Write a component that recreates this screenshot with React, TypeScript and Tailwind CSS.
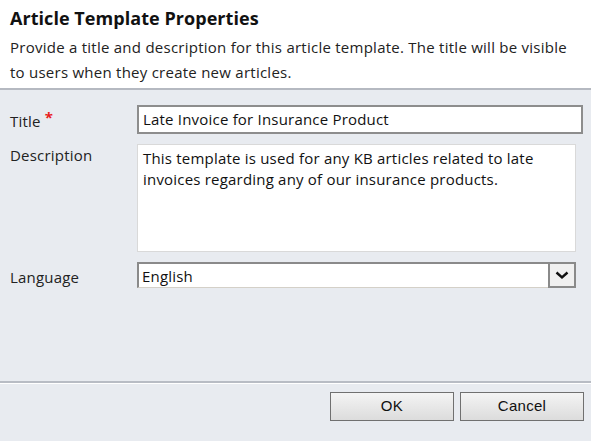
import React from "react";

const seg = { fontFamily: '"Open Sans", "Noto Sans", sans-serif' };

export default function App() {
  return (
    <div className="w-[591px] h-[441px] bg-[#e8ebf0] flex flex-col overflow-hidden" style={seg}>
      <div className="h-[88px] bg-white px-[10px] pt-[5px] shrink-0">
        <div className="text-[18px] font-bold text-[#111] leading-[26px] tracking-[0.05px]">Article Template Properties</div>
        <div className="mt-[4px] text-[15px] text-[#222] leading-[25px] tracking-[0.25px]">
          Provide a title and description for this article template. The title will be visible to users when they create new articles.
        </div>
      </div>
      <div className="h-[2px] bg-[#b5b9c1] shrink-0" />
      <div className="flex-1 flex flex-col pl-[10px] pt-[15px]">
        <div className="flex items-center h-[29px]">
          <div className="w-[127px] text-[15px] text-[#222] tracking-[0.2px] pt-[3px]">
            Title <span className="text-[#e81c1c] font-bold relative -top-[4px]">*</span>
          </div>
          <div className="w-[446px] h-[29px] bg-white border-2 border-[#8d8d8d] flex items-center px-[4px] text-[15px] text-[#111] tracking-[0.2px]">
            Late Invoice for Insurance Product
          </div>
        </div>
        <div className="flex mt-[10px]">
          <div className="w-[127px] text-[15px] text-[#222] tracking-[0.2px]">Description</div>
          <div className="w-[439px] h-[108px] bg-white border border-[#d9d9d9] px-[5px] pt-[3px] text-[15px] text-[#111] leading-[21px] tracking-[0.2px]">
            This template is used for any KB articles related to late invoices regarding any of our insurance products.
          </div>
        </div>
        <div className="flex items-center mt-[10px]">
          <div className="w-[127px] text-[15px] text-[#222] pt-[4px] tracking-[0.2px]">Language</div>
          <div className="w-[439px] h-[26px] bg-white border-t-2 border-l-2 border-[#8a8a8a] border-b border-r border-b-[#d4d0c8] border-r-[#d4d0c8] flex items-stretch">
            <div className="flex-1 flex items-center px-[3px] text-[15px] text-[#111] tracking-[0.2px]">English</div>
            <div className="w-[28px] bg-[#f0f0f0] border-2 border-[#8a8a8a] -mt-[2px] -mb-[1px] -mr-[1px] flex items-center justify-center">
              <svg width="14" height="9" viewBox="0 0 14 9">
                <path d="M1.5 1.5 L7 6.5 L12.5 1.5" fill="none" stroke="#111" strokeWidth="2.4" />
              </svg>
            </div>
          </div>
        </div>
        <div className="flex-1" />
      </div>
      <div className="h-[2px] bg-[#b8bcc4] shrink-0" />
      <div className="h-[1px] bg-white shrink-0" />
      <div className="h-[57px] shrink-0 flex justify-end gap-[6px] pr-[7px] pt-[8px]">
        {["OK", "Cancel"].map((t) => (
          <div
            key={t}
            className="w-[124px] h-[29px] border border-[#707070] bg-gradient-to-b from-[#f4f4f4] to-[#dcdcdc] flex items-center justify-center text-[15px] text-[#111] tracking-[0.3px]"
            style={{ fontFamily: '"Liberation Sans", Arial, sans-serif' }}
          >
            {t}
          </div>
        ))}
      </div>
    </div>
  );
}
